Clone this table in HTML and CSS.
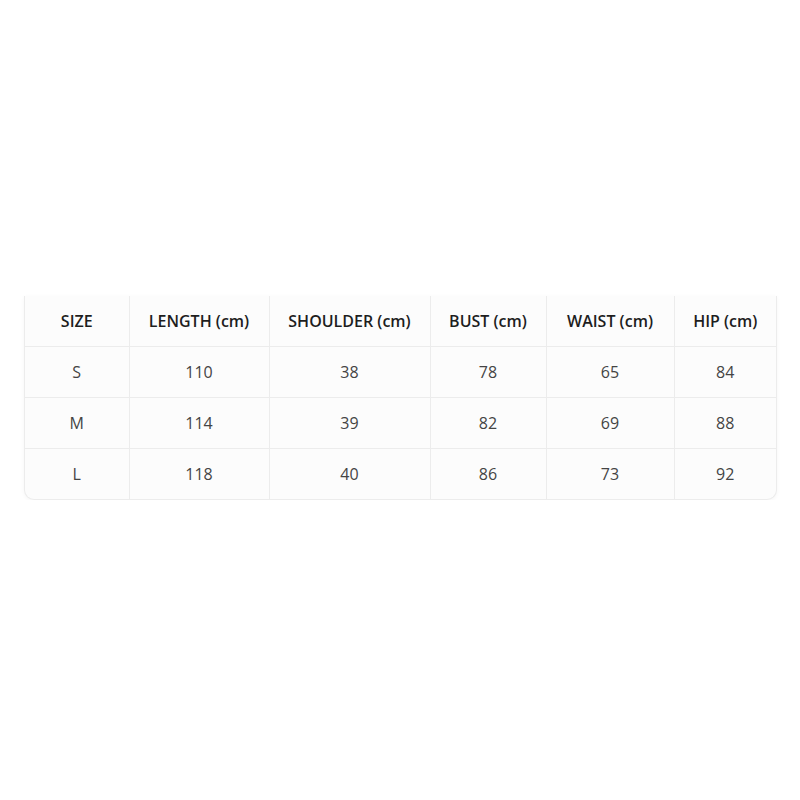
FILE: index.html
```html
<!DOCTYPE html>
<html>
<head>
<meta charset="utf-8">
<link rel="stylesheet" href="styles.css">
</head>
<body>
<div class="page">
  <div class="card">
    <table class="sizes">
      <colgroup>
        <col class="c1"><col class="c2"><col class="c3"><col class="c4"><col class="c5"><col class="c6">
      </colgroup>
      <thead>
        <tr><th>SIZE</th><th>LENGTH (cm)</th><th>SHOULDER (cm)</th><th>BUST (cm)</th><th>WAIST (cm)</th><th>HIP (cm)</th></tr>
      </thead>
      <tbody>
        <tr><td>S</td><td>110</td><td>38</td><td>78</td><td>65</td><td>84</td></tr>
        <tr><td>M</td><td>114</td><td>39</td><td>82</td><td>69</td><td>88</td></tr>
        <tr><td>L</td><td>118</td><td>40</td><td>86</td><td>73</td><td>92</td></tr>
      </tbody>
    </table>
  </div>
</div>
</body>
</html>
```
FILE: styles.css
```css
html, body {
  margin: 0;
  padding: 0;
  background: #ffffff;
}
.page {
  padding: 296px 23px 0 24px;
  font-family: "Open Sans", "Noto Sans", sans-serif;
}
.card {
  width: 753px;
  background: #fcfcfc;
  border-left: 1px solid #ececec;
  border-right: 1px solid #ececec;
  border-bottom: 1px solid #ececec;
  border-radius: 0 0 10px 10px;
  box-shadow: 0 1px 4px rgba(0,0,0,0.04);
  overflow: hidden;
  box-sizing: border-box;
}
.sizes {
  width: 100%;
  border-collapse: collapse;
  table-layout: fixed;
}
.c1 { width: 104px; }
.c2 { width: 140px; }
.c3 { width: 161px; }
.c4 { width: 116px; }
.c5 { width: 128px; }
.c6 { width: auto; }
.sizes th, .sizes td {
  text-align: center;
  border-right: 1px solid #ececec;
  border-bottom: 1px solid #ececec;
  padding: 2px 0 0 0;
  line-height: 1.2;
}
.sizes th:last-child, .sizes td:last-child { border-right: none; }
.sizes tbody tr:last-child td { border-bottom: none; }
.sizes th {
  height: 48px;
  font-size: 16px;
  font-weight: 600;
  color: #1e1e1e;
}
.sizes td {
  height: 48px;
  font-size: 16px;
  font-weight: 400;
  color: #444444;
}
```
